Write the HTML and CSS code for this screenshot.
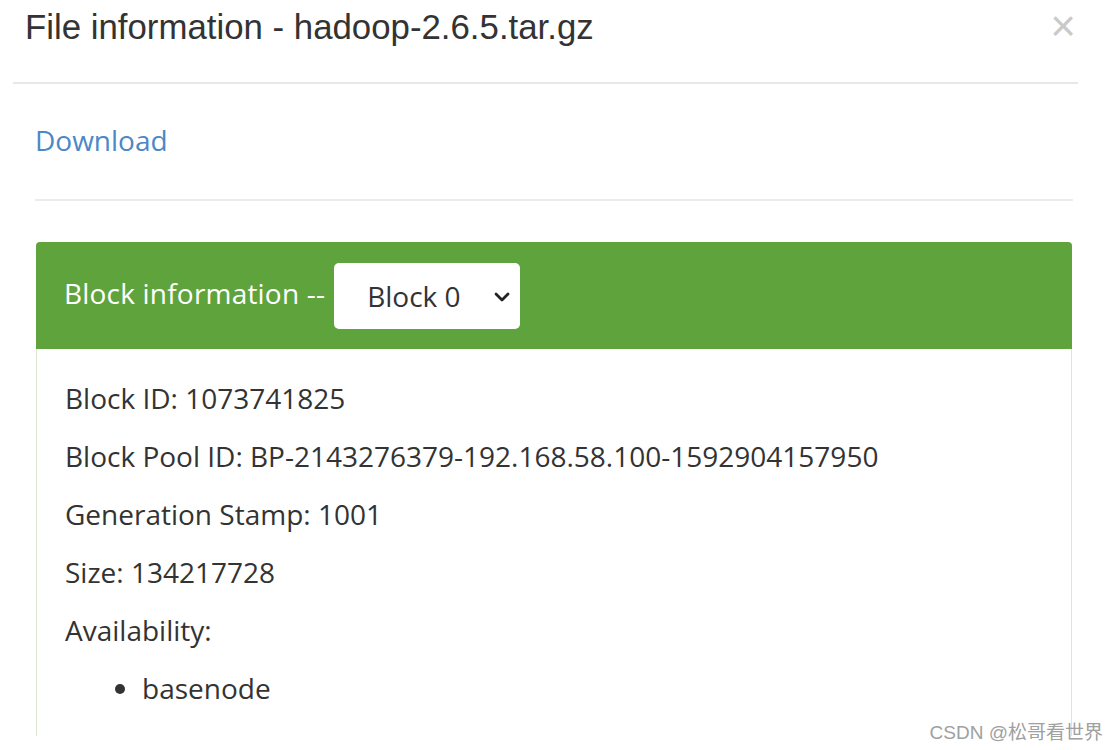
FILE: index.html
```html
<!DOCTYPE html>
<html>
<head>
<meta charset="utf-8">
<link rel="stylesheet" href="styles.css">
</head>
<body>
<div class="modal">
  <div class="modal-header">
    <h4 class="modal-title">File information - hadoop-2.6.5.tar.gz</h4>
    <span class="close">&times;</span>
  </div>
  <div class="modal-body">
    <a class="download" href="#">Download</a>
    <hr class="sep">
    <div class="panel">
      <div class="panel-heading">
        <span class="panel-title">Block information --</span>
        <div class="select">
          <span>Block 0</span>
          <svg class="chev" width="16" height="12" viewBox="0 0 16 12"><path d="M2 3 L8 9 L14 3" fill="none" stroke="#222" stroke-width="2.8" stroke-linecap="round" stroke-linejoin="round"/></svg>
        </div>
      </div>
      <div class="panel-body">
        <p>Block ID: 1073741825</p>
        <p>Block Pool ID: BP-2143276379-192.168.58.100-1592904157950</p>
        <p>Generation Stamp: 1001</p>
        <p>Size: 134217728</p>
        <p>Availability:</p>
        <ul>
          <li>basenode</li>
        </ul>
      </div>
    </div>
  </div>
</div>
<div class="watermark">CSDN @松哥看世界</div>
</body>
</html>
```
FILE: styles.css
```css
html, body {
  margin: 0;
  padding: 0;
  background: #fff;
  width: 1118px;
  height: 750px;
  overflow: hidden;
}
body {
  font-family: "Open Sans", "Noto Sans", sans-serif;
  color: #333;
  position: relative;
}
.modal {
  margin-left: 13px;
  width: 1065px;
}
.modal-header {
  display: flex;
  align-items: flex-start;
  justify-content: space-between;
  height: 82px;
  border-bottom: 2px solid #e7e7e7;
  padding: 0 2px 0 12px;
}
.modal-title {
  margin: 0;
  padding-top: 7px;
  font-family: "Liberation Sans", Arial, sans-serif;
  font-weight: normal;
  font-size: 34.8px;
  line-height: 40px;
  color: #333;
}
.close {
  font-family: "Liberation Sans", Arial, sans-serif;
  font-size: 44px;
  line-height: 44px;
  color: #c9c9c9;
  padding-top: 4px;
}
.modal-body {
  padding: 0 5px 0 22px;
}
.download {
  display: inline-block;
  margin-top: 38px;
  font-size: 28px;
  line-height: 36px;
  color: #4c87c7;
  text-decoration: none;
}
.sep {
  margin: 41px 0 0 0;
  border: 0;
  border-top: 2px solid #ececec;
}
.panel {
  margin: 41px 1px 0 1px;
  border: 1px solid #dde6cf;
  border-bottom: 0;
  border-radius: 5px 5px 0 0;
  height: 493px;
}
.panel-heading {
  background: #5fa33d;
  height: 107px;
  border-radius: 4px 4px 0 0;
  display: flex;
  align-items: center;
  padding-left: 28px;
  margin: -1px -1px 0 -1px;
}
.panel-title {
  color: #fff;
  font-size: 28px;
  margin-right: 9px;
  margin-top: -6px;
  letter-spacing: 0.2px;
}
.select {
  width: 186px;
  height: 66px;
  background: #fff;
  border-radius: 5px;
  display: flex;
  align-items: center;
  justify-content: space-between;
  box-sizing: border-box;
  padding: 0 10px 0 33px;
  font-size: 28px;
  color: #333;
  margin-top: 1px;
}
.chev {
  margin-top: 2px;
}
.panel-body {
  padding: 31px 28px 0 28px;
  font-size: 28px;
  line-height: 36px;
}
.panel-body p {
  margin: 0 0 22px 0;
}
.panel-body ul {
  margin: 0;
  padding-left: 77px;
}
.watermark {
  position: absolute;
  right: 15px;
  bottom: 6px;
  font-family: "Liberation Sans", "Noto Sans CJK SC", sans-serif;
  font-size: 19px;
  color: #a0a0a0;
}
```
